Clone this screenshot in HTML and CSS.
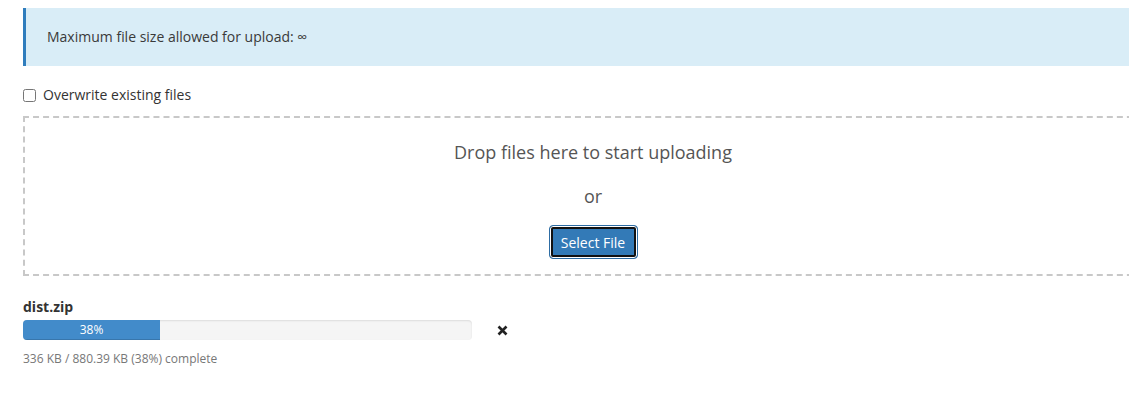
FILE: index.html
```html
<!DOCTYPE html>
<html>
<head>
<meta charset="utf-8">
<link rel="stylesheet" href="styles.css">
</head>
<body>
<div class="page">
  <div class="alert">Maximum file size allowed for upload: ∞</div>
  <label class="check"><input type="checkbox"><span>Overwrite existing files</span></label>
  <div class="dropzone">
    <div class="drop-text">Drop files here to start uploading</div>
    <div class="drop-or">or</div>
    <button class="btn">Select File</button>
  </div>
  <div class="file">
    <div class="file-name">dist.zip</div>
    <div class="file-row">
      <div class="progress"><div class="progress-bar" style="width:137px">38%</div></div>
      <svg class="cancel" width="11" height="11" viewBox="0 0 11 11"><path d="M1.5 1.5 L9.5 9.5 M9.5 1.5 L1.5 9.5" stroke="#222" stroke-width="2.6" stroke-linecap="butt"/></svg>
    </div>
    <div class="file-status">336 KB / 880.39 KB (38%) complete</div>
  </div>
</div>
</body>
</html>
```
FILE: styles.css
```css
html, body {
  margin: 0;
  padding: 0;
  overflow: hidden;
  background: #fff;
}
body {
  font-family: "Open Sans", "Liberation Sans", sans-serif;
  color: #333;
}
.page {
  padding: 8px 0 0 23px;
  width: 1140px;
}
.alert {
  background: #d9edf7;
  border-left: 3px solid #2f7dbd;
  padding: 20px 21px;
  font-size: 14px;
  line-height: 18px;
  color: #3a3a3a;
}
.check {
  display: flex;
  align-items: center;
  margin-top: 19px;
  font-size: 14px;
  line-height: 19px;
  color: #333;
}
.check input {
  width: 13px;
  height: 13px;
  margin: 1px 7px 0 0;
}
.dropzone {
  margin-top: 12px;
  border: 2px dashed #c8c8c8;
  height: 160px;
  box-sizing: border-box;
  display: flex;
  flex-direction: column;
  align-items: center;
  padding-top: 22px;
  color: #555;
}
.drop-text {
  font-size: 18px;
  line-height: 24px;
}
.drop-or {
  font-size: 18px;
  line-height: 24px;
  margin-top: 20px;
}
.btn {
  margin-top: 17px;
  width: 89px;
  height: 34px;
  box-sizing: border-box;
  background: #337ab7;
  color: #fff;
  font-family: inherit;
  font-size: 14px;
  border: 1px solid #2e6da4;
  border-radius: 4px;
  box-shadow: inset 0 0 0 1px #fff, inset 0 0 0 3px #111;
  padding: 0;
}
.file {
  margin-top: 22px;
}
.file-name {
  font-weight: bold;
  font-size: 14px;
  line-height: 18px;
}
.file-row {
  display: flex;
  align-items: center;
  margin-top: 4px;
}
.progress {
  width: 449px;
  height: 20px;
  background: #f5f5f5;
  border-radius: 4px;
  box-shadow: inset 0 1px 2px rgba(0,0,0,.1);
  overflow: hidden;
}
.progress-bar {
  height: 20px;
  background: #428bca;
  color: #fff;
  font-size: 12px;
  line-height: 20px;
  text-align: center;
  box-shadow: inset 0 -1px 0 rgba(0,0,0,.15);
}
.cancel {
  margin-left: 25px;
  margin-top: 1px;
}
.file-status {
  margin-top: 10px;
  font-size: 12px;
  line-height: 17px;
  color: #777;
}
```
